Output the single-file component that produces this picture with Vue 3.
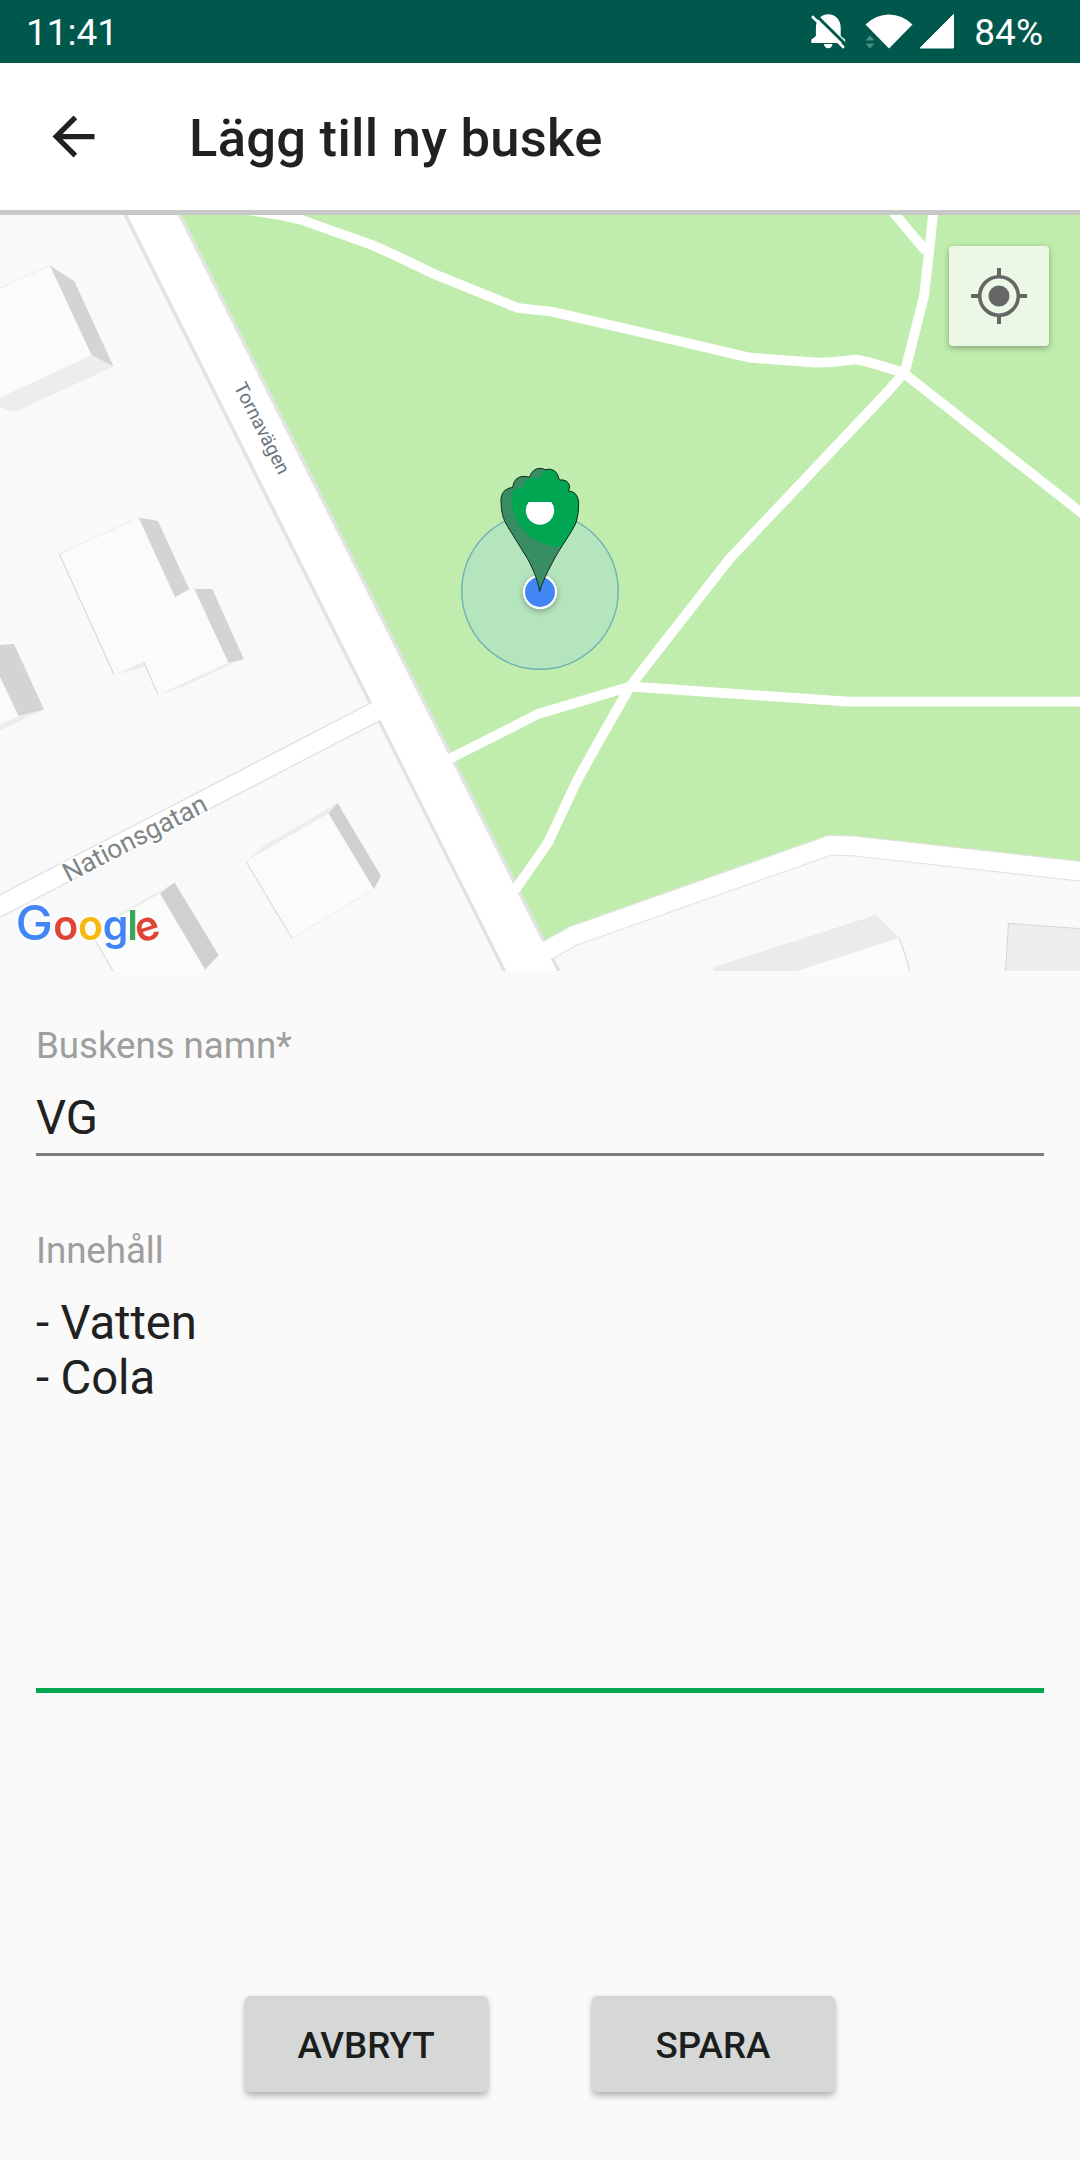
<script setup>
const paths = [
  '235,208 283,215.5 302,220 334,231.5 372,245 400,257.5 434,274 518,308 551,311.5 640,332 750,357.7 816.7,362.7 833,362 856,359.5 870,362.5 903,372.5 1090,519.500',
  '934,205 929.3,250 924,296 904,375',
  '886,204 926,251',
  '903,374 886.7,392.7 730,558.3 697,600.5 666,640 630.5,686 603.8,732.5 577.3,780 548,842.7 515,890',
  '446,760.5 538,714 630.5,686.5 848,701.7 1090,701.7',
]

const fields = [
  { id: 'name', label: 'Buskens namn*', lines: ['VG'] },
  { id: 'content', label: 'Innehåll', lines: ['- Vatten', '- Cola'] },
]

const actions = ['AVBRYT', 'SPARA']
</script>

<template>
  <div class="screen">
    <header class="status">
      <span>11:41</span>
      <div class="status-right">
        <svg class="bell" width="36" height="36" viewBox="0 0 36 36">
          <path fill="#fff" d="M17.300 1.300C24.500 1.300 29.700 7 29.700 14.500V23l4.500 3.800V30H.3v-3.200L4.900 23v-8.500C4.900 7 10 1.300 17.300 1.300zM13 31h8.500c0 2.500-2 4.300-4.200 4.300S13 33.500 13 31z" />
          <path stroke="#00574b" stroke-width="3" d="M3.500.8l32.500 32" />
          <path stroke="#fff" stroke-width="2.600" d="M1 3.200l32 31.500" />
        </svg>
        <svg class="wifi" width="48" height="36" viewBox="0 0 48 36">
          <path fill="#fff" d="M24 35.500L.5 11.500Q11 1.500 24 1.500T47.500 11.500z" />
          <path fill="#4d8c82" d="M.5 27.500l4.500-5 4.500 5zM.5 30.500l4.500 5 4.500-5z" />
        </svg>
        <svg class="signal" width="36" height="36" viewBox="0 0 36 36">
          <path fill="#fff" stroke="#fff" stroke-linejoin="round" d="M34.500 1.500v33.500H1z" />
        </svg>
        <span>84%</span>
      </div>
    </header>

    <div class="toolbar">
      <svg width="63" height="63" viewBox="0 0 24 24">
        <path fill="#212121" d="M20 11H7.830l5.590-5.590L12 4l-8 8 8 8 1.410-1.410L7.830 13H20z" />
      </svg>
      <h1>Lägg till ny buske</h1>
    </div>

    <div class="map">
      <svg class="canvas" width="1080" height="756" viewBox="0 215 1080 756">
        <rect y="215" width="1080" height="756" fill="#f8f9fb" />
        <polygon fill="#c0edad" points="150,215 1080,215 1080,871 854,846 830,845 573,936 530,958" />

        <g fill="none" stroke-linejoin="round">
          <g stroke="#e3e3e3">
            <path stroke-width="52" d="M95 100L596.300 1100" />
            <path stroke-width="21.500" d="M-40 926.700L374 712.500" />
            <path stroke-width="20.800" d="M530 960L573 936 830 845.300 854 846 1090 872.300" />
          </g>
          <g stroke="#fff">
            <path stroke-width="45" d="M95 100L596.300 1100" />
            <path stroke-width="18.500" d="M-40 926.700L385 706.800" />
            <path stroke-width="18.400" d="M530 960L573 936 830 845.300 854 846 1090 872.300" />
            <polyline v-for="p in paths" :key="p" :points="p" stroke-width="9.800" />
          </g>
        </g>

        <g fill="#ededed">
          <polygon points="0,397.500 91.500,355 113.500,366.500 17,411 12,411.500 0,407" />
          <polygon points="114,674.500 143.500,661.500 144,667 133,670.500" />
          <polygon points="158,694.500 228.500,662.500 236,662 180,688" />
          <polygon points="0,724 18.700,716 44,709.500 0,730.500" />
          <polygon points="246,861.500 328.500,813.500 337.500,803 262,847" />
          <polygon points="91,933 160,893.500 174.500,882.500 115,916" />
        </g>
        <g fill="#f9fcfa">
          <polygon points="0,288 50,265.500 91.500,355 0,397.500" />
          <polygon points="59.300,554 138.500,517.500 175,597 194,588.500 228.500,662.500 158,694.500 143.500,661.500 114,674.500" />
          <polygon points="0,677 18.700,716 0,724" />
          <polygon points="246,861.500 328.500,813.500 374,889 292,938.500" />
          <polygon points="91,933 160,893.500 205,969.500 203,971 113,971" />
          <polygon points="899,937.700 909.800,971 796.800,971" />
        </g>
        <g fill="#d4d4d4">
          <polygon points="50,265.500 74.500,281.500 113.500,366.500 91.500,355" />
          <polygon points="138.500,517.500 158,521 189.300,589.500 175,597" />
          <polygon points="194.300,589 212.300,589 244,659.500 228.500,662.700" />
          <polygon points="0,645 14,644 44,709.500 18.700,716 0,677" />
        </g>
        <g fill="#cfd1d0">
          <polygon points="328.500,813.500 337.500,803 381,876 374,889" />
          <polygon points="160,893.500 174.500,882.500 218.700,955.300 205,969.500" />
        </g>
        <polygon fill="#ebebeb" points="713,967.300 875.700,915 899,937.700 796.800,971 713,971" />
        <polygon fill="#eee" stroke="#d6d6d6" points="1008.400,923.300 1085,929 1085,975 1005.400,975" />
        <g fill="none" stroke="#c6c8c8" stroke-width=".8">
          <path d="M59.300 554L114 674.500M143.500 661.500L158 694.500M246 861.500L292 938.500M91 933L113 971M899 937.700Q905 952 909.800 971" />
          <path stroke="#e6e8e7" d="M0 288L50 265.500M59.300 554L138.500 517.500M292 938.500L374 889" />
        </g>

        <text class="street" font-size="19.200" fill="#6b767e" transform="translate(233.500 386.600) rotate(63)">Tornavägen</text>
        <text class="street halo" font-size="26.400" fill="#808688" transform="translate(68.500 882.500) rotate(-27.300)">Nationsgatan</text>

        <g class="brand">
          <text y="940.300" font-size="47.500" textLength="37.500" lengthAdjust="spacingAndGlyphs" x="15.500" fill="#4285f4" class="initial">G</text>
          <text y="939.800" font-size="41"><tspan x="53.300" fill="#e04437">o</tspan><tspan x="78" fill="#f6b90f">o</tspan><tspan x="102.700" fill="#4285f4">g</tspan><tspan x="127.200" fill="#3aa757">l</tspan></text>
          <text font-size="41" fill="#e04437" transform="translate(139.300 943.500) rotate(-18)">e</text>
        </g>

        <circle cx="540" cy="591" r="78.300" fill="#b5e5bd" stroke="#70b1b6" stroke-width="1.400" />
        <circle class="dot" cx="540" cy="592" r="17.200" fill="#fff" />
        <circle cx="540" cy="592" r="15" fill="#4285f4" />
        <g transform="translate(440 440) scale(.33333)">
          <path fill="#388e62" d="M299 454C294 420 275 378 262 355L203 260C188 235 183 215 183 175Q187 146 218 142Q222 108 255 109Q263 110 268 112Q278 85 300 85Q310 85 315 89Q350 80 358 120Q383 117 389 138Q389 147 385 153Q411 153 416 185Q417 220 409 245C400 270 360 325 345 353C325 390 305 430 299 454z" />
          <path fill="#00a651" d="M318 89Q350 82 358 120Q383 117 389 138Q389 147 385 153Q411 153 416 185Q417 220 409 245C400 270 380 295 363 321C265 318 200 235 217 155Q235 140 250 143Q250 125 268 115Q285 108 302 117Q304 95 318 89z" />
          <path fill="none" stroke="#10291c" stroke-width="3" stroke-linejoin="round" d="M299 454C294 420 275 378 262 355L203 260C188 235 183 215 183 175Q187 146 218 142Q222 108 255 109Q263 110 268 112Q278 85 300 85Q310 85 315 89Q350 80 358 120Q383 117 389 138Q389 147 385 153Q411 153 416 185Q417 220 409 245C400 270 360 325 345 353C325 390 305 430 299 454z" />
          <path fill="#fff" d="M266 186H334A42.500 42.500 0 1 1 266 186z" />
        </g>
      </svg>
      <button class="locate" aria-label="Min plats">
        <svg width="60" height="60" viewBox="-30 -30 60 60">
          <circle r="10.500" fill="#666" />
          <circle r="19.300" fill="none" stroke="#666" stroke-width="3.600" />
          <path stroke="#666" stroke-width="4" d="M0-28v8M0 20v8M-28 0h8M20 0h8" />
        </svg>
      </button>
    </div>

    <main class="form">
      <section v-for="f in fields" :key="f.id" class="field" :class="f.id">
        <div class="label">{{ f.label }}</div>
        <div class="value">
          <div v-for="line in f.lines" :key="line">{{ line }}</div>
        </div>
      </section>
    </main>

    <footer class="actions">
      <button v-for="a in actions" :key="a">{{ a }}</button>
    </footer>
  </div>
</template>

<style>
body {
  margin: 0;
  background: #fafafa;
}
</style>

<style scoped>
.screen {
  width: 1080px;
  height: 2160px;
  display: flex;
  flex-direction: column;
  overflow: hidden;
  background: #fafafa;
  color: #212121;
  font-family: Roboto, "Noto Sans", sans-serif;
}
.status {
  height: 63px;
  flex: none;
  box-sizing: border-box;
  padding: 3px 37px 0 26px;
  display: flex;
  align-items: center;
  justify-content: space-between;
  background: #00574b;
  color: #fff;
  font-size: 37px;
  line-height: 60px;
}
.status-right {
  display: flex;
  align-items: center;
}
.status-right svg {
  display: block;
  margin-bottom: 4px;
}
.wifi {
  margin-left: 18px;
}
.signal {
  margin: 0 19px 0 6px;
}
.toolbar {
  height: 147px;
  flex: none;
  display: flex;
  align-items: center;
  padding-left: 42px;
  background: #fff;
  border-bottom: 5px solid #c8c8c8;
}
.toolbar h1 {
  margin: 3px 0 0 84px;
  font-size: 52.5px;
  font-weight: 500;
  line-height: 62px;
  letter-spacing: 0.28px;
}
.map {
  position: relative;
  flex: none;
  height: 756px;
}
.canvas {
  display: block;
}
.street {
  font-family: Roboto, sans-serif;
}
.halo {
  paint-order: stroke;
  stroke: #fff;
  stroke-width: 4px;
  stroke-linejoin: round;
}
.brand {
  font-family: Inter, sans-serif;
  font-weight: 600;
  filter: drop-shadow(0 0 2px #fff) drop-shadow(0 0 2px #fff);
}
.initial {
  font-weight: 500;
}
.dot {
  filter: drop-shadow(0 2px 3px rgba(0, 0, 0, 0.3));
}
.locate {
  position: absolute;
  top: 31px;
  right: 31px;
  width: 100px;
  height: 100px;
  padding: 0;
  border: 0;
  border-radius: 4px;
  display: flex;
  align-items: center;
  justify-content: center;
  background: #ebf8e6;
  box-shadow: 0 2px 6px rgba(0, 0, 0, 0.32);
}
.form {
  padding: 53px 36px 0;
}
.field {
  box-sizing: border-box;
}
.label {
  font-size: 36.75px;
  line-height: 43px;
  color: #9e9e9e;
  letter-spacing: -0.08px;
}
.value {
  margin-top: 24px;
  font-size: 47.25px;
  line-height: 55.4px;
  letter-spacing: -0.1px;
}
.name {
  height: 132px;
  border-bottom: 3px solid #7c7c7c;
}
.content {
  margin-top: 73px;
  height: 464px;
  border-bottom: 5px solid #00a651;
}
.actions {
  margin-top: 303px;
  display: flex;
  justify-content: center;
  gap: 104px;
}
.actions button {
  width: 243px;
  height: 96px;
  padding: 3px 1px 0 0;
  border: 0;
  border-radius: 5px;
  background: #d6d8d7;
  color: #1c1d1d;
  font: 500 36.75px Roboto, sans-serif;
  box-shadow: 0 4px 6px rgba(0, 0, 0, 0.27), 0 0 3px rgba(0, 0, 0, 0.08);
}
</style>
